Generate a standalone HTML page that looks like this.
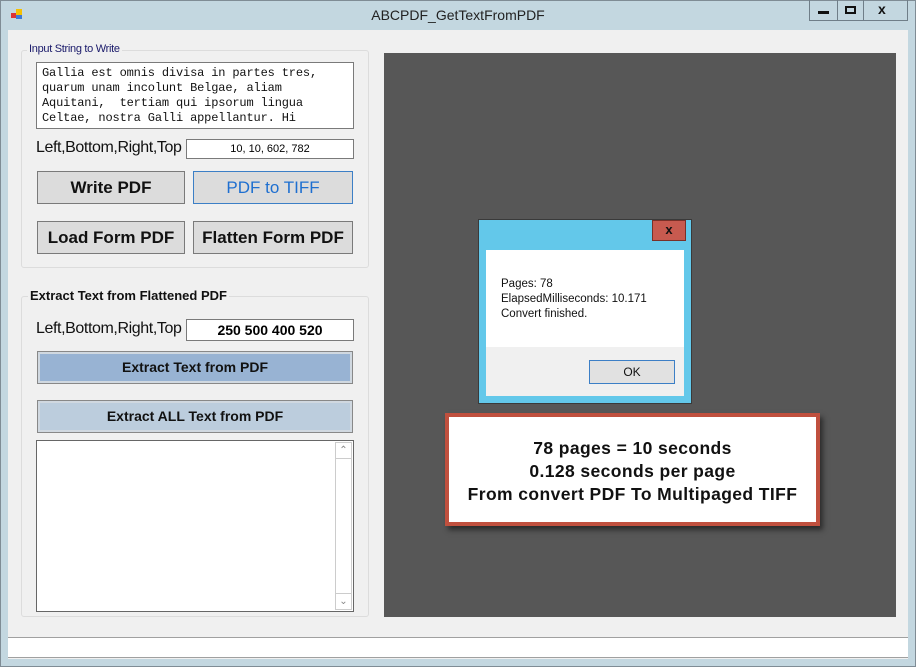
<!DOCTYPE html>
<html><head><style>
*{margin:0;padding:0;box-sizing:border-box}
body{width:916px;height:667px;background:#c3d7e0;position:relative;overflow:hidden;font-family:"Liberation Sans",sans-serif}
.a{position:absolute}
.frame{left:0;top:0;width:916px;height:667px;border:1px solid #7f8c95;background:#c3d7e0}
.client{left:8px;top:30px;width:900px;height:629px;background:#f0f0f0}
.btn{position:absolute;background:#dcdcdc;border:1px solid #7a7a7a;font-weight:bold;font-size:17px;text-align:center;color:#111}
.gb{position:absolute;border:1px solid #dcdcdc;border-radius:3px}
.inp{position:absolute;background:#fff;border:1px solid #7a7a7a}
</style></head><body>
<div class="a frame"></div>
<div class="a" style="left:11px;top:13px;width:5px;height:5px;background:#d33;"></div>
<div class="a" style="left:16px;top:9px;width:6px;height:6px;background:#f5c000;"></div>
<div class="a" style="left:16px;top:15px;width:6px;height:4px;background:#3d7ad6;"></div>
<div class="a" style="left:0;top:7px;width:916px;text-align:center;font-size:14px;color:#222">ABCPDF_GetTextFromPDF</div>
<div class="a" style="left:809px;top:0;width:99px;height:21px;border:1px solid #6f7e88;border-top:none"></div>
<div class="a" style="left:837px;top:0;width:1px;height:21px;background:#6f7e88"></div>
<div class="a" style="left:863px;top:0;width:1px;height:21px;background:#6f7e88"></div>
<div class="a" style="left:818px;top:11px;width:11px;height:3px;background:#111"></div>
<div class="a" style="left:845px;top:6px;width:11px;height:8px;border:2px solid #111"></div>
<div class="a" style="left:878px;top:1px;font-size:14px;font-weight:bold;color:#111">x</div>
<div class="a client"></div>
<div class="gb" style="left:21px;top:50px;width:348px;height:218px"></div>
<div class="a" style="left:27px;top:43px;background:#f0f0f0;padding:0 2px;font-size:11px;color:#1a1a6a;letter-spacing:-0.3px">Input String to Write</div>
<div class="inp" style="left:36px;top:62px;width:318px;height:67px;padding:3px 5px;font-family:'Liberation Mono',monospace;font-size:12px;line-height:15px;color:#111;white-space:pre;letter-spacing:-0.15px">Gallia est omnis divisa in partes tres,
quarum unam incolunt Belgae, aliam
Aquitani,  tertiam qui ipsorum lingua
Celtae, nostra Galli appellantur. Hi</div>
<div class="a" style="left:36px;top:139px;font-size:16px;color:#111;letter-spacing:-0.4px">Left,Bottom,Right,Top</div>
<div class="inp" style="left:186px;top:139px;width:168px;height:20px;text-align:center;font-size:11px;line-height:18px">10, 10, 602, 782</div>
<div class="btn" style="left:37px;top:171px;width:148px;height:33px;line-height:31px">Write PDF</div>
<div class="btn" style="left:193px;top:171px;width:160px;height:33px;line-height:31px;border-color:#3c7fc6;color:#1e6fd0;font-weight:normal">PDF to TIFF</div>
<div class="btn" style="left:37px;top:221px;width:148px;height:33px;line-height:31px">Load Form PDF</div>
<div class="btn" style="left:193px;top:221px;width:160px;height:33px;line-height:31px">Flatten Form PDF</div>
<div class="gb" style="left:21px;top:296px;width:348px;height:321px"></div>
<div class="a" style="left:28px;top:288px;background:#f0f0f0;padding:0 2px;font-size:13px;font-weight:bold;color:#111">Extract Text from Flattened PDF</div>
<div class="a" style="left:36px;top:320px;font-size:16px;color:#111;letter-spacing:-0.4px">Left,Bottom,Right,Top</div>
<div class="inp" style="left:186px;top:319px;width:168px;height:22px;text-align:center;font-size:14px;font-weight:bold;line-height:20px">250 500 400 520</div>
<div class="btn" style="left:37px;top:351px;width:316px;height:33px;line-height:30px;font-size:14px;background:#98b3d3;border:1px solid #888;box-shadow:inset 0 0 0 2px #d0d8e0">Extract Text from PDF</div>
<div class="btn" style="left:37px;top:400px;width:316px;height:33px;line-height:30px;font-size:14px;background:#bccddd;border:1px solid #888;box-shadow:inset 0 0 0 2px #d0d8e0">Extract ALL Text from PDF</div>
<div class="inp" style="left:36px;top:440px;width:318px;height:172px;border-color:#666"></div>
<div class="a" style="left:335px;top:442px;width:17px;height:168px;background:#fff;border:1px solid #ccc"></div>
<div class="a" style="left:336px;top:442px;width:15px;height:17px;border-bottom:1px solid #ccc;font-size:10px;color:#888;text-align:center;line-height:17px">&#8963;</div>
<div class="a" style="left:336px;top:593px;width:15px;height:17px;border-top:1px solid #ccc;font-size:10px;color:#888;text-align:center;line-height:15px">&#8964;</div>
<div class="a" style="left:8px;top:637px;width:900px;height:21px;background:#fff;border-top:1px solid #a0a0a0;border-bottom:1px solid #a0a0a0"></div>
<div class="a" style="left:384px;top:53px;width:512px;height:564px;background:#575757"></div>
<div class="a" style="left:478px;top:219px;width:214px;height:185px;background:#63c8ea;border:1px solid #3a3a3a"></div>
<div class="a" style="left:652px;top:220px;width:34px;height:21px;background:#c75a4f;border:1px solid #7a3028;text-align:center;font-size:13px;font-weight:bold;line-height:18px;color:#111">x</div>
<div class="a" style="left:486px;top:250px;width:198px;height:146px;background:#f0f0f0"></div>
<div class="a" style="left:486px;top:250px;width:198px;height:97px;background:#fff;padding:27px 0 0 15px;font-size:11.5px;line-height:15px;color:#111">Pages: 78<br>ElapsedMilliseconds: 10.171<br>Convert finished.</div>
<div class="a" style="left:589px;top:360px;width:86px;height:24px;background:#e1e1e1;border:1px solid #3c7fc6;text-align:center;font-size:12px;line-height:22px;color:#111">OK</div>
<div class="a" style="left:445px;top:413px;width:375px;height:113px;background:#fff;border:4px solid #c0503e;box-shadow:3px 4px 5px rgba(0,0,0,.5);text-align:center;font-weight:bold;font-size:17.5px;letter-spacing:0.4px;line-height:23px;padding-top:20px;color:#111">78 pages = 10 seconds<br>0.128 seconds per page<br>From convert PDF To Multipaged TIFF</div>
</body></html>
